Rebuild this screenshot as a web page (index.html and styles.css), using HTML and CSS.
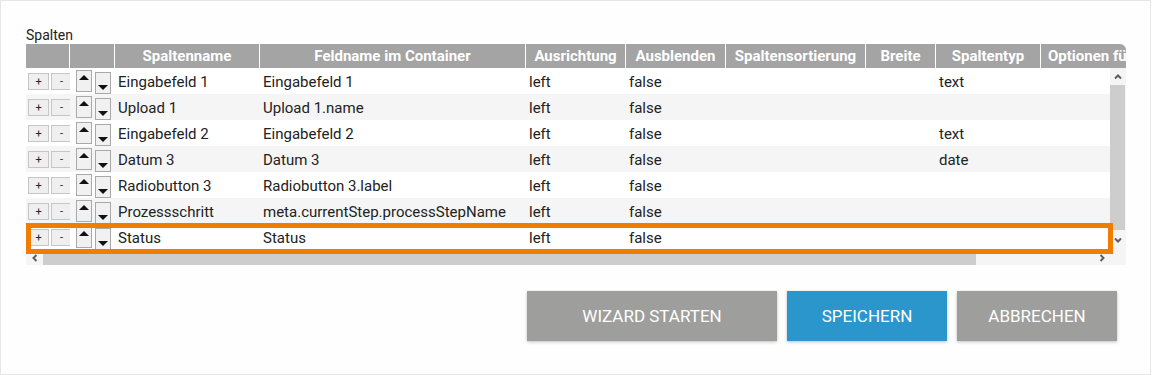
FILE: index.html
```html
<!DOCTYPE html>
<html lang="de">
<head>
<meta charset="UTF-8">
<title>Spalten</title>
<link rel="stylesheet" href="styles.css">
</head>
<body>
<div class="panel">
  <div class="label">Spalten</div>
  <div class="grid">
    <div class="grid-head">
      <div class="hc w1"></div>
      <div class="hc w2"></div>
      <div class="hc w3">Spaltenname</div>
      <div class="hc w4">Feldname im Container</div>
      <div class="hc w5">Ausrichtung</div>
      <div class="hc w6">Ausblenden</div>
      <div class="hc w7">Spaltensortierung</div>
      <div class="hc w8">Breite</div>
      <div class="hc w9">Spaltentyp</div>
      <div class="hc w10 last">Optionen für Spaltentyp</div>
    </div>
    <div class="grid-main">
      <div class="grid-view">
        <div class="grid-body">
          <div class="row">
            <div class="c w1 tools"><span class="pm">+</span><span class="pm">-</span></div>
            <div class="c w2 moves"><span class="mv up"><i class="tri-up"></i></span><span class="mv down"><i class="tri-down"></i></span></div>
            <div class="c w3">Eingabefeld 1</div>
            <div class="c w4">Eingabefeld 1</div>
            <div class="c w5">left</div>
            <div class="c w6">false</div>
            <div class="c w7"></div>
            <div class="c w8"></div>
            <div class="c w9">text</div>
            <div class="c w10"></div>
          </div>
          <div class="row">
            <div class="c w1 tools"><span class="pm">+</span><span class="pm">-</span></div>
            <div class="c w2 moves"><span class="mv up"><i class="tri-up"></i></span><span class="mv down"><i class="tri-down"></i></span></div>
            <div class="c w3">Upload 1</div>
            <div class="c w4">Upload 1.name</div>
            <div class="c w5">left</div>
            <div class="c w6">false</div>
            <div class="c w7"></div>
            <div class="c w8"></div>
            <div class="c w9"></div>
            <div class="c w10"></div>
          </div>
          <div class="row">
            <div class="c w1 tools"><span class="pm">+</span><span class="pm">-</span></div>
            <div class="c w2 moves"><span class="mv up"><i class="tri-up"></i></span><span class="mv down"><i class="tri-down"></i></span></div>
            <div class="c w3">Eingabefeld 2</div>
            <div class="c w4">Eingabefeld 2</div>
            <div class="c w5">left</div>
            <div class="c w6">false</div>
            <div class="c w7"></div>
            <div class="c w8"></div>
            <div class="c w9">text</div>
            <div class="c w10"></div>
          </div>
          <div class="row">
            <div class="c w1 tools"><span class="pm">+</span><span class="pm">-</span></div>
            <div class="c w2 moves"><span class="mv up"><i class="tri-up"></i></span><span class="mv down"><i class="tri-down"></i></span></div>
            <div class="c w3">Datum 3</div>
            <div class="c w4">Datum 3</div>
            <div class="c w5">left</div>
            <div class="c w6">false</div>
            <div class="c w7"></div>
            <div class="c w8"></div>
            <div class="c w9">date</div>
            <div class="c w10"></div>
          </div>
          <div class="row">
            <div class="c w1 tools"><span class="pm">+</span><span class="pm">-</span></div>
            <div class="c w2 moves"><span class="mv up"><i class="tri-up"></i></span><span class="mv down"><i class="tri-down"></i></span></div>
            <div class="c w3">Radiobutton 3</div>
            <div class="c w4">Radiobutton 3.label</div>
            <div class="c w5">left</div>
            <div class="c w6">false</div>
            <div class="c w7"></div>
            <div class="c w8"></div>
            <div class="c w9"></div>
            <div class="c w10"></div>
          </div>
          <div class="row">
            <div class="c w1 tools"><span class="pm">+</span><span class="pm">-</span></div>
            <div class="c w2 moves"><span class="mv up"><i class="tri-up"></i></span><span class="mv down"><i class="tri-down"></i></span></div>
            <div class="c w3">Prozessschritt</div>
            <div class="c w4">meta.currentStep.processStepName</div>
            <div class="c w5">left</div>
            <div class="c w6">false</div>
            <div class="c w7"></div>
            <div class="c w8"></div>
            <div class="c w9"></div>
            <div class="c w10"></div>
          </div>
          <div class="row">
            <div class="c w1 tools"><span class="pm">+</span><span class="pm">-</span></div>
            <div class="c w2 moves"><span class="mv up"><i class="tri-up"></i></span><span class="mv down"><i class="tri-down"></i></span></div>
            <div class="c w3">Status</div>
            <div class="c w4">Status</div>
            <div class="c w5">left</div>
            <div class="c w6">false</div>
            <div class="c w7"></div>
            <div class="c w8"></div>
            <div class="c w9"></div>
            <div class="c w10"></div>
          </div>
        </div>
        <div class="hbar">
          <span class="sbtn"><svg width="8" height="8" viewBox="0 0 8 8"><polyline points="5.5,1 2.5,4 5.5,7" fill="none" stroke="#5f5f5f" stroke-width="2"/></svg></span>
          <span class="hthumb"></span>
          <span class="hspace"></span>
          <span class="sbtn"><svg width="8" height="8" viewBox="0 0 8 8"><polyline points="2.5,1 5.5,4 2.5,7" fill="none" stroke="#5f5f5f" stroke-width="2"/></svg></span>
        </div>
      </div>
      <div class="vcol">
        <span class="vbtn top"><svg width="8" height="8" viewBox="0 0 8 8"><polyline points="1,5.5 4,2.5 7,5.5" fill="none" stroke="#5f5f5f" stroke-width="2"/></svg></span>
        <span class="vthumb"></span>
        <span class="vbtn bottom"><svg width="8" height="8" viewBox="0 0 8 8"><polyline points="1,2.5 4,5.5 7,2.5" fill="none" stroke="#5f5f5f" stroke-width="2"/></svg></span>
        <span class="corner"></span>
      </div>
    </div>
    <div class="mark"></div>
  </div>
  <div class="actions">
    <button class="btn grey wide">Wizard starten</button>
    <button class="btn blue">Speichern</button>
    <button class="btn grey">Abbrechen</button>
  </div>
</div>
</body>
</html>
```

FILE: styles.css
```css
body {
  margin: 0;
  font-family: Roboto, "Liberation Sans", sans-serif;
  background-color: #fff;
}

.panel {
  width: 1151px;
  height: 375px;
  box-sizing: border-box;
  border: 1px solid #e6e6e6;
  background-color: #fefefe;
  padding: 26px 0 0 25px;
}

.label {
  font-size: 14px;
  line-height: 17px;
  color: #222;
}

.grid {
  position: relative;
  width: 1100px;
}

.grid-head {
  display: flex;
  height: 24px;
  background-color: #a4a4a4;
  border-top-right-radius: 6px;
  overflow: hidden;
}

.hc {
  flex-shrink: 0;
  box-sizing: border-box;
  border-right: 1px solid #fff;
  color: #fff;
  font-size: 15px;
  font-weight: bold;
  line-height: 24px;
  text-align: center;
  white-space: nowrap;
  overflow: hidden;
}

.hc.last {
  text-align: left;
  padding-left: 7px;
  border-right: none;
}

.w1 { width: 44px; }
.w2 { width: 45px; }
.w3 { width: 145px; }
.w4 { width: 266px; }
.w5 { width: 100px; }
.w6 { width: 100px; }
.w7 { width: 140px; }
.w8 { width: 70px; }
.w9 { width: 105px; }
.w10 { width: 180px; }

.grid-main {
  display: flex;
}

.grid-view {
  width: 1084px;
}

.grid-body {
  height: 182px;
  overflow: hidden;
}

.row {
  display: flex;
  height: 26px;
  background-color: #fff;
}

.row:nth-child(even) {
  background-color: #f5f5f5;
}

.c {
  flex-shrink: 0;
  box-sizing: border-box;
  height: 26px;
  padding: 2px 3px 0;
  font-size: 15px;
  line-height: 24px;
  color: #222;
  white-space: nowrap;
  overflow: hidden;
}

.tools {
  display: flex;
  gap: 2px;
  padding: 0 0 0 2px;
}

.pm {
  flex-shrink: 0;
  width: 21px;
  height: 17px;
  margin-top: 5px;
  box-sizing: border-box;
  border: 1px solid #c6c6c6;
  background-color: #efefef;
  font-size: 11px;
  line-height: 15px;
  text-align: center;
  color: #222;
}

.moves {
  display: flex;
  gap: 3px;
  padding: 0 0 0 6px;
}

.mv {
  display: flex;
  flex-direction: column;
  align-items: center;
  width: 16px;
  height: 22px;
  box-sizing: border-box;
  border: 1px solid #a9a9a9;
  background-color: #f1f1f1;
}

.mv.up {
  margin-top: 2px;
  justify-content: flex-start;
  padding-top: 4px;
}

.mv.down {
  margin-top: 4px;
  justify-content: flex-end;
  padding-bottom: 3px;
}

.tri-up {
  width: 0;
  height: 0;
  border-left: 5px solid transparent;
  border-right: 5px solid transparent;
  border-bottom: 5px solid #111;
}

.tri-down {
  width: 0;
  height: 0;
  border-left: 5px solid transparent;
  border-right: 5px solid transparent;
  border-top: 5px solid #111;
}

.hbar {
  display: flex;
  height: 15px;
  background-color: #f5f5f5;
}

.sbtn {
  display: flex;
  align-items: center;
  justify-content: center;
  width: 17px;
  flex-shrink: 0;
}

.hthumb {
  width: 933px;
  margin-top: 3px;
  background-color: #cdcdcd;
}

.hspace {
  flex: 1;
}

.vcol {
  display: flex;
  flex-direction: column;
  width: 16px;
  background-color: #f5f5f5;
}

.vbtn {
  display: flex;
  align-items: center;
  justify-content: center;
}

.vbtn.top {
  height: 17px;
}

.vthumb {
  height: 145px;
  width: 15px;
  background-color: #cdcdcd;
}

.vbtn.bottom {
  height: 20px;
}

.corner {
  height: 15px;
}

.mark {
  position: absolute;
  left: 0;
  top: 179px;
  width: 1087px;
  height: 31px;
  box-sizing: border-box;
  border: 5px solid #f07c00;
}

.actions {
  display: flex;
  justify-content: flex-end;
  gap: 10px;
  width: 1091px;
  margin-top: 26px;
}

.btn {
  width: 160px;
  height: 50px;
  border: none;
  color: #fff;
  font-family: Roboto, "Liberation Sans", sans-serif;
  font-size: 17px;
  text-transform: uppercase;
  box-shadow: 0 1px 3px rgba(0, 0, 0, 0.25);
  cursor: pointer;
}

.btn.wide {
  width: 250px;
}

.grey {
  background-color: #9e9e9c;
}

.blue {
  background-color: #2a96cc;
}
```
